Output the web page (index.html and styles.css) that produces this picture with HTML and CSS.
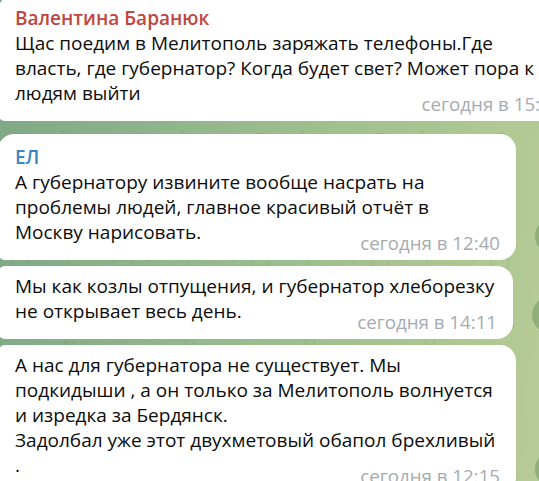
FILE: index.html
```html
<!DOCTYPE html>
<html lang="ru">
<head>
<meta charset="utf-8">
<title>Чат</title>
<link rel="stylesheet" href="styles.css">
</head>
<body>
<div class="chat">
  <div class="row">
    <div class="bubble first b-top">
      <div class="name red">Валентина Баранюк</div>
      <div class="text">Щас поедим в Мелитополь заряжать телефоны.Где<br>власть, где губернатор? Когда будет свет? Может пора к<br>людям выйти</div>
      <div class="time">сегодня в 15:</div>
    </div>
  </div>
  <div class="row new-sender">
    <div class="bubble first b-wide">
      <div class="name blue">ЕЛ</div>
      <div class="text">А губернатору извините вообще насрать на<br>проблемы людей, главное красивый отчёт в<br>Москву нарисовать.</div>
      <div class="time">сегодня в 12:40</div>
    </div>
    <div class="share"></div>
  </div>
  <div class="row">
    <div class="bubble b-mid">
      <div class="text">Мы как козлы отпущения, и губернатор хлеборезку<br>не открывает весь день.</div>
      <div class="time">сегодня в 14:11</div>
    </div>
    <div class="share"></div>
  </div>
  <div class="row">
    <div class="bubble b-wide">
      <div class="text">А нас для губернатора не существует. Мы<br>подкидыши , а он только за Мелитополь волнуется<br>и изредка за Бердянск.<br>Задолбал уже этот двухметовый обапол брехливый<br>.</div>
      <div class="time">сегодня в 12:15</div>
    </div>
    <div class="share"></div>
  </div>
</div>
</body>
</html>
```
FILE: styles.css
```css
html, body {
  margin: 0;
  height: 100%;
  overflow: hidden;
}
body {
  background:
    url("data:image/svg+xml;utf8,<svg xmlns='http://www.w3.org/2000/svg' width='120' height='120'><g fill='none' stroke='rgba(60,100,50,0.13)' stroke-width='1.2'><circle cx='20' cy='22' r='9'/><path d='M60 10 q12 8 4 22 q-8 12 6 20'/><path d='M90 70 c10 -10 22 -2 18 10 c-4 10 -16 8 -18 -2z'/><path d='M14 80 l14 -8 l6 14 l-12 10z'/><circle cx='70' cy='100' r='5'/><path d='M100 20 q8 -6 14 2'/></g></svg>"),
    linear-gradient(95deg, #7ea885 0%, #9cbf8e 55%, #b7cb96 100%);
  font-family: "Open Sans", "Noto Sans", sans-serif;
  color: #000;
}
.chat {
  display: flex;
  flex-direction: column;
  margin-left: -2px;
  margin-top: -5px;
}
.row {
  display: flex;
  align-items: flex-end;
  gap: 19px;
  margin-top: 6px;
}
.row:first-child { margin-top: 0; }
.row.new-sender { margin-top: 13px; }
.bubble {
  background: #fff;
  border-radius: 7px 16px 16px 7px;
  padding: 8px 16px 6px 17px;
  box-sizing: border-box;
  flex: none;
}
.bubble.first { border-top-left-radius: 16px; }
.b-top { width: 558px; }
.b-wide { width: 518px; }
.b-mid { width: 515px; }
.name {
  font-size: 19px;
  font-weight: 600;
  line-height: 25px;
  margin-top: 3px;
}
.red { color: #c0463f; }
.blue { color: #3a86c2; }
.text {
  font-size: 19px;
  line-height: 25px;
  white-space: nowrap;
  color: #0c0c0c;
}
.time {
  font-size: 18.7px;
  line-height: 22px;
  color: #a5abb0;
  text-align: right;
  margin-top: -13px;
}
.share {
  flex: none;
  width: 36px;
  height: 36px;
  border-radius: 50%;
  background: rgba(64, 116, 64, 0.32);
  margin-bottom: 6px;
}
```
